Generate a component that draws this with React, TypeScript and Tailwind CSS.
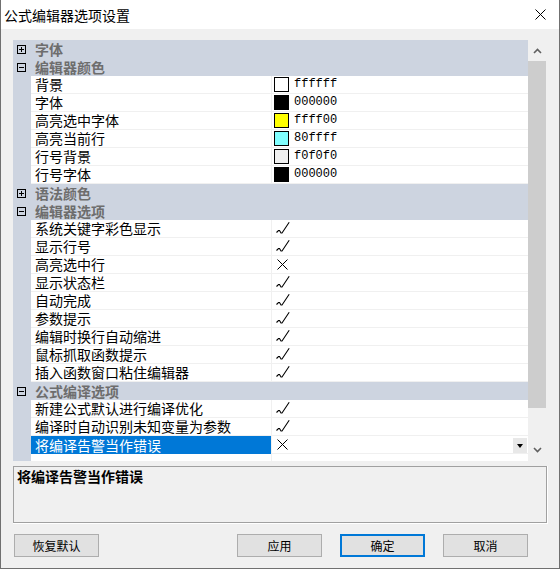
import React from "react";

type Row =
  | { kind: "cat"; label: string; open: boolean }
  | { kind: "color"; label: string; hex: string }
  | { kind: "bool"; label: string; on: boolean; selected?: boolean };

const rows: Row[] = [
  { kind: "cat", label: "字体", open: false },
  { kind: "cat", label: "编辑器颜色", open: true },
  { kind: "color", label: "背景", hex: "ffffff" },
  { kind: "color", label: "字体", hex: "000000" },
  { kind: "color", label: "高亮选中字体", hex: "ffff00" },
  { kind: "color", label: "高亮当前行", hex: "80ffff" },
  { kind: "color", label: "行号背景", hex: "f0f0f0" },
  { kind: "color", label: "行号字体", hex: "000000" },
  { kind: "cat", label: "语法颜色", open: false },
  { kind: "cat", label: "编辑器选项", open: true },
  { kind: "bool", label: "系统关键字彩色显示", on: true },
  { kind: "bool", label: "显示行号", on: true },
  { kind: "bool", label: "高亮选中行", on: false },
  { kind: "bool", label: "显示状态栏", on: true },
  { kind: "bool", label: "自动完成", on: true },
  { kind: "bool", label: "参数提示", on: true },
  { kind: "bool", label: "编辑时换行自动缩进", on: true },
  { kind: "bool", label: "鼠标抓取函数提示", on: true },
  { kind: "bool", label: "插入函数窗口粘住编辑器", on: true },
  { kind: "cat", label: "公式编译选项", open: true },
  { kind: "bool", label: "新建公式默认进行编译优化", on: true },
  { kind: "bool", label: "编译时自动识别未知变量为参数", on: true },
  { kind: "bool", label: "将编译告警当作错误", on: false, selected: true },
];

// swatch colours, keyed by the hex text
const swatch: Record<string, string> = {
  ffffff: "bg-[#ffffff]",
  "000000": "bg-[#000000]",
  ffff00: "bg-[#ffff00]",
  "80ffff": "bg-[#80ffff]",
  f0f0f0: "bg-[#f0f0f0]",
};

const Check = () => (
  <svg width="14" height="13" viewBox="0 0 14 13" className="mt-[2px]">
    <path
      d="M0.5 10.5 L2.5 8.5 L3.5 8.5 L5 11 L6 11 L13.2 0.3"
      fill="none"
      stroke="#000"
      strokeWidth="1.1"
    />
  </svg>
);

const Cross = () => (
  <svg width="11" height="11" viewBox="0 0 11 11" className="ml-[1px] mt-[3px]">
    <path d="M0.5 0.5 L10.5 10.5 M10.5 0.5 L0.5 10.5" stroke="#000" strokeWidth="1" />
  </svg>
);

const Toggle = ({ open }: { open: boolean }) => (
  <div className="relative w-[9px] h-[9px] border border-black ml-[4px]">
    <div className="absolute left-[1px] top-[3px] w-[5px] h-px bg-black" />
    {!open && <div className="absolute left-[3px] top-[1px] w-px h-[5px] bg-black" />}
  </div>
);

const GridRow = ({ row }: { row: Row }) => {
  if (row.kind === "cat") {
    return (
      <div className="flex items-center h-[18px] bg-[#cdd4e0]">
        <div className="w-[18px] flex items-center">
          <Toggle open={row.open} />
        </div>
        <div className="pl-[4px] h-[18px] text-[14px] leading-[18px] font-bold text-[#6d6d6d]">
          {row.label}
        </div>
      </div>
    );
  }
  const sel = row.kind === "bool" && row.selected;
  return (
    <div className="flex h-[18px]">
      <div className="w-[18px] bg-[#cdd4e0]" />
      <div
        className={
          sel
            ? "w-[241px] pl-[4px] border-r border-r-[#f0f0f0] bg-[#0078d7] text-white text-[14px] leading-[18px]"
            : "w-[241px] pl-[4px] border-r border-b border-[#f0f0f0] bg-white text-black text-[14px] leading-[17px]"
        }
      >
        {row.label}
      </div>
      <div className="flex-1 flex items-start bg-white border-b border-[#f0f0f0] pl-[2px]">
        {row.kind === "color" ? (
          <>
            <div className={`mt-[1px] w-[15px] h-[15px] border border-black ${swatch[row.hex]}`} />
            <div className="ml-[5px] font-['Liberation_Mono','DejaVu_Sans_Mono',monospace] text-[12px] leading-[17px]">
              {row.hex}
            </div>
          </>
        ) : (
          <div className="pl-[2px]">{row.on ? <Check /> : <Cross />}</div>
        )}
        {sel && (
          <div className="ml-auto mr-[1px] mt-[2px] w-[14px] h-[15px] bg-[#e8e8e8] flex items-center justify-center">
            <div className="w-0 h-0 border-l-[3px] border-r-[3px] border-t-[4px] border-l-transparent border-r-transparent border-t-black" />
          </div>
        )}
      </div>
    </div>
  );
};

const Button = ({ label, primary }: { label: string; primary?: boolean }) => (
  <div
    className={
      primary
        ? "w-[85px] h-[23px] bg-[#e1e1e1] border-2 border-[#0078d7] flex items-center justify-center text-[12px]"
        : "w-[85px] h-[23px] bg-[#e1e1e1] border border-[#adadad] flex items-center justify-center text-[12px]"
    }
  >
    {label}
  </div>
);

export default function App() {
  return (
    <div className="w-[560px] h-[569px] bg-[#f0f0f0] border-x border-b border-[#707070] flex flex-col font-['Noto_Sans_CJK_SC',sans-serif] text-black overflow-hidden">
      {/* title bar */}
      <div className="h-[29px] bg-white flex items-center justify-between pl-[3px] pr-[13px] shrink-0">
        <span className="text-[14px] leading-[18px]">公式编辑器选项设置</span>
        <svg width="11" height="11" viewBox="0 0 11 11">
          <path d="M0.5 0.5 L10.5 10.5 M10.5 0.5 L0.5 10.5" stroke="#000" strokeWidth="1" />
        </svg>
      </div>

      {/* property grid */}
      <div className="mt-[11px] ml-[12px] w-[534px] h-[421px] flex shrink-0">
        <div className="w-[515px] flex flex-col">
          {rows.map((r, i) => (
            <GridRow key={i} row={r} />
          ))}
          <div className="flex flex-1">
            <div className="w-[18px] bg-[#cdd4e0]" />
            <div className="w-[241px] bg-white border-r border-[#f0f0f0]" />
            <div className="flex-1 bg-white" />
          </div>
        </div>
        <div className="w-[19px] flex flex-col bg-[#f0f0f0]">
          <div className="h-[21px] flex items-center justify-center">
            <svg width="9" height="6" viewBox="0 0 9 6">
              <path d="M1 5 L4.5 1.5 L8 5" fill="none" stroke="#606060" strokeWidth="1.6" />
            </svg>
          </div>
          <div className="h-[347px] w-[18px] bg-[#cdcdcd]" />
          <div className="flex-1 flex items-end justify-center pb-[8px]">
            <svg width="9" height="6" viewBox="0 0 9 6">
              <path d="M1 1 L4.5 4.5 L8 1" fill="none" stroke="#606060" strokeWidth="1.6" />
            </svg>
          </div>
        </div>
      </div>

      {/* description */}
      <div className="mt-[5px] ml-[12px] w-[535px] h-[58px] border-r border-b border-white shrink-0">
        <div className="w-full h-full border border-[#a0a0a0] pl-[3px]">
          <div className="text-[14px] leading-[18px] font-bold">将编译告警当作错误</div>
        </div>
      </div>

      {/* buttons */}
      <div className="mt-[10px] ml-[13px] flex shrink-0">
        <Button label="恢复默认" />
        <div className="ml-[138px] flex gap-[18px]">
          <Button label="应用" />
          <Button label="确定" primary />
          <Button label="取消" />
        </div>
      </div>
    </div>
  );
}
